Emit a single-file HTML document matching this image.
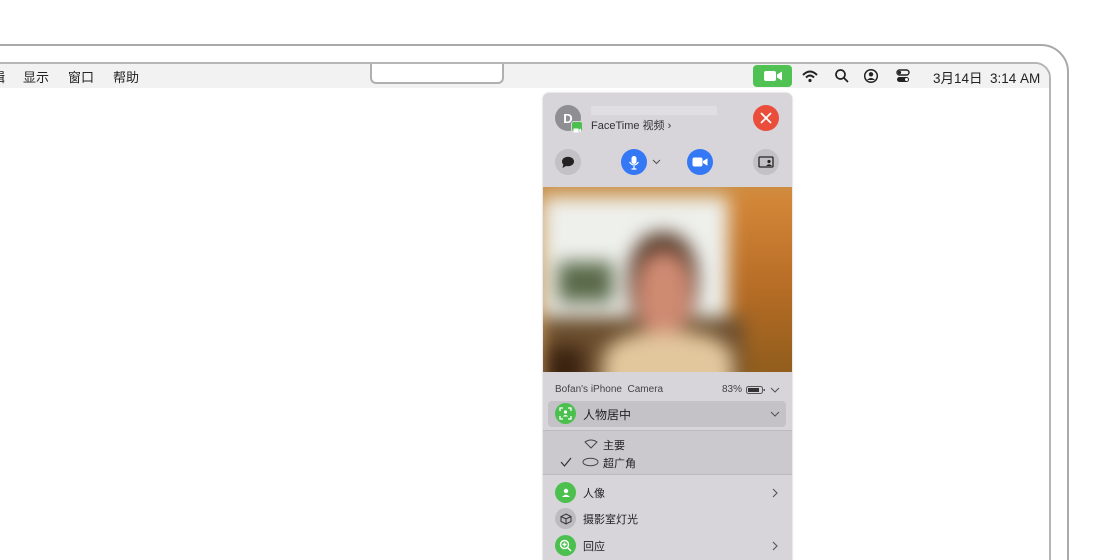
<!DOCTYPE html>
<html style="width:1120px;height:560px;overflow:hidden"><head><meta charset="utf-8"><style>
*{margin:0;padding:0;box-sizing:border-box}
body{width:1120px;height:560px;background:#fff;position:relative;overflow:hidden;font-family:"Liberation Sans","Noto Sans CJK SC",sans-serif;color:#222}
.abs{position:absolute}
.outer{left:-20px;top:44px;width:1089px;height:540px;border:2px solid #a9a9a9;border-radius:0 28px 0 0}
.screen{left:-20px;top:62px;width:1071px;height:520px;border:2px solid #b5b5b5;border-radius:0 16px 0 0;background:#fff;overflow:hidden}
.menubar{left:0;top:0;width:100%;height:24px;background:#f2f2f2}
.notch{left:388px;top:-2px;width:134px;height:22px;background:#fff;border:2px solid #b0b0b0;border-top:none;border-radius:0 0 6px 6px}
.mt{font-size:13px;top:3px;color:#222}
.panel{left:543px;top:93px;width:249px;height:480px;background:#d7d4da;border-radius:6px 6px 0 0;box-shadow:0 0 2px rgba(0,0,0,.25);overflow:hidden}
.circ{border-radius:50%;display:flex;align-items:center;justify-content:center}
.t13{font-size:12px}
.green{background:#4cc04e}
</style></head><body>
<div class="abs outer"></div>
<div class="abs screen">
 <div class="abs menubar"></div>
 <div class="abs notch"></div>
 <div class="abs mt" style="left:10px">辑</div>
 <div class="abs mt" style="left:41px">显示</div>
 <div class="abs mt" style="left:86px">窗口</div>
 <div class="abs mt" style="left:131px">帮助</div>
 <div class="abs" style="left:771px;top:1px;width:39px;height:22px;background:#50c153;border-radius:4px">
  <svg width="39" height="22"><rect x="11" y="6" width="12" height="10" rx="2" fill="#fff"/><path d="M24 9.5 L29 6.5 V15.5 L24 12.5Z" fill="#fff"/></svg>
 </div>
 <svg class="abs" style="left:819px;top:4px" width="18" height="16"><path d="M2 7 Q9 0 16 7" stroke="#222" stroke-width="2" fill="none"/><path d="M5 9.5 Q9 5.5 13 9.5" stroke="#222" stroke-width="2" fill="none"/><circle cx="9" cy="12.5" r="1.6" fill="#222"/></svg>
 <svg class="abs" style="left:852px;top:4px" width="16" height="16"><circle cx="6.5" cy="6.5" r="4.5" stroke="#222" stroke-width="1.7" fill="none"/><path d="M10 10 L14 14" stroke="#222" stroke-width="1.8"/></svg>
 <svg class="abs" style="left:881px;top:4px" width="16" height="16"><circle cx="8" cy="8" r="6.3" stroke="#222" stroke-width="1.5" fill="none"/><circle cx="8" cy="6.3" r="2.2" fill="#222"/><path d="M4 12 Q8 8 12 12" fill="#222"/></svg>
 <svg class="abs" style="left:913px;top:4px" width="16" height="16"><rect x="2" y="2" width="12" height="5" rx="2.5" stroke="#222" stroke-width="1.4" fill="none"/><circle cx="4.5" cy="4.5" r="1.6" fill="#222"/><rect x="2" y="9" width="12" height="5" rx="2.5" fill="#222"/><circle cx="11.5" cy="11.5" r="1.5" fill="#fff"/></svg>
 <div class="abs mt" style="left:951px;font-size:13.5px">3月14日&nbsp; 3:14 AM</div>
</div>

<div class="abs panel">
 <div class="abs circ" style="left:12px;top:12px;width:26px;height:26px;background:#8e8e93;color:#fff;font-size:13px;font-weight:bold">D</div>
 <div class="abs" style="left:28px;top:28px;width:12px;height:11px;background:#4cc04e;border-radius:3px;border:1px solid #d7d4da"><svg width="10" height="9"><rect x="1.5" y="2.5" width="5" height="4" fill="#fff"/><path d="M6.5 4 L9 2.5 V6.5Z" fill="#fff"/></svg></div>
 <div class="abs" style="left:48px;top:13px;width:126px;height:9px;background:#e0dee2"></div>
 <div class="abs" style="left:48px;top:24px;font-size:11px;color:#333">FaceTime 视频 ›</div>
 <div class="abs circ" style="left:210px;top:12px;width:26px;height:26px;background:#ea4d3a"><svg width="12" height="12"><path d="M1 1L11 11M11 1L1 11" stroke="#fff" stroke-width="1.8"/></svg></div>
 <div class="abs circ" style="left:12px;top:56px;width:26px;height:26px;background:#c3c0c6"><svg width="14" height="13"><ellipse cx="7" cy="5.5" rx="6" ry="4.8" fill="#222"/><path d="M2.5 8 L1.5 12 L6 9.5Z" fill="#222"/></svg></div>
 <div class="abs circ" style="left:78px;top:56px;width:26px;height:26px;background:#3478f6"><svg width="12" height="15"><rect x="3.5" y="1" width="5" height="8" rx="2.5" fill="#fff"/><path d="M1.5 7 Q6 13 10.5 7M6 11V14M3.5 14H8.5" stroke="#fff" stroke-width="1.2" fill="none"/></svg></div>
 <svg class="abs" style="left:109px;top:66px" width="9" height="6"><path d="M1 1L4.5 4.5L8 1" stroke="#555" stroke-width="1.1" fill="none"/></svg>
 <div class="abs circ" style="left:144px;top:56px;width:26px;height:26px;background:#3478f6"><svg width="16" height="10"><rect x="0.5" y="0.5" width="10" height="9" rx="2" fill="#fff"/><path d="M11 4L15.5 1.2V8.8L11 6Z" fill="#fff"/></svg></div>
 <div class="abs circ" style="left:210px;top:56px;width:26px;height:26px;background:#c3c0c6"><svg width="16" height="12"><rect x="1" y="1" width="14" height="10" rx="1" stroke="#222" stroke-width="1.3" fill="none"/><circle cx="11" cy="5.5" r="1.6" fill="#222"/><path d="M8 10 Q11 6.5 14 10Z" fill="#222"/></svg></div>

 <div class="abs" style="left:0;top:94px;width:249px;height:185px;overflow:hidden;background:#c99a5a">
  <div class="abs" style="left:-20px;top:-20px;width:300px;height:230px;filter:blur(9px)">
   <div class="abs" style="left:0;top:0;width:300px;height:40px;background:#c8904a"></div>
   <div class="abs" style="left:20px;top:30px;width:190px;height:140px;background:#eef0ec"></div>
   <div class="abs" style="left:205px;top:20px;width:95px;height:200px;background:linear-gradient(#d68a3a,#b76d26 50%,#8a5a1a)"></div>
   <div class="abs" style="left:35px;top:95px;width:55px;height:40px;background:#5a6a4a"></div>
   <div class="abs" style="left:20px;top:150px;width:200px;height:80px;background:#6b4e2e"></div>
   <div class="abs" style="left:105px;top:65px;width:70px;height:100px;background:#5a3d2c;border-radius:45%"></div>
   <div class="abs" style="left:113px;top:85px;width:56px;height:85px;background:#cf8a72;border-radius:45%"></div>
   <div class="abs" style="left:80px;top:165px;width:130px;height:70px;background:#e2c69c;border-radius:40% 40% 0 0"></div>
   <div class="abs" style="left:20px;top:180px;width:40px;height:50px;background:#3a2210"></div>
  </div>
 </div>

 <div class="abs" style="left:12px;top:291px;font-size:10px;color:#444">Bofan's iPhone&nbsp; Camera</div>
 <div class="abs" style="left:179px;top:291px;font-size:10px;color:#444">83%</div>
 <svg class="abs" style="left:203px;top:292px" width="20" height="10"><rect x="0.5" y="1.5" width="16" height="7" rx="2" stroke="#555" fill="none"/><rect x="2" y="3" width="11" height="4" fill="#333"/><rect x="17.5" y="4" width="1.5" height="2" fill="#555"/></svg>
 <svg class="abs" style="left:227px;top:294px" width="10" height="6"><path d="M1 1L5 5L9 1" stroke="#555" stroke-width="1.1" fill="none"/></svg>

 <div class="abs" style="left:5px;top:308px;width:238px;height:26px;background:#c4c1c7;border-radius:4px"></div>
 <div class="abs circ green" style="left:12px;top:310px;width:21px;height:21px"><svg width="13" height="13"><path d="M1 4V1H4M9 1H12V4M12 9V12H9M4 12H1V9" stroke="#fff" stroke-width="1.3" fill="none"/><circle cx="6.5" cy="5" r="1.6" fill="#fff"/><path d="M3.8 9.5Q6.5 6.5 9.2 9.5Z" fill="#fff"/></svg></div>
 <div class="abs t13" style="left:40px;top:313px;color:#222">人物居中</div>
 <svg class="abs" style="left:227px;top:318px" width="10" height="6"><path d="M1 1L5 5L9 1" stroke="#555" stroke-width="1.1" fill="none"/></svg>

 <div class="abs" style="left:0;top:337px;width:249px;height:45px;background:#cbc8ce;border-top:1px solid #bdbabf;border-bottom:1px solid #bdbabf"></div>
 <svg class="abs" style="left:41px;top:346px" width="14" height="10"><path d="M1 3Q7 -1 13 3L7 9Z" stroke="#444" stroke-width="1" fill="none"/></svg>
 <div class="abs t13" style="left:60px;top:344px;font-size:11px">主要</div>
 <svg class="abs" style="left:17px;top:364px" width="12" height="10"><path d="M1 5L4.5 9L11 1" stroke="#333" stroke-width="1.2" fill="none"/></svg>
 <svg class="abs" style="left:39px;top:364px" width="17" height="10"><ellipse cx="8.5" cy="5" rx="7.5" ry="3.8" stroke="#444" stroke-width="1" fill="none"/></svg>
 <div class="abs t13" style="left:60px;top:362px;font-size:11px">超广角</div>

 <div class="abs circ green" style="left:12px;top:389px;width:21px;height:21px"><svg width="12" height="12"><circle cx="6" cy="4" r="2.2" fill="#fff"/><path d="M2 10Q6 5.5 10 10Z" fill="#fff"/></svg></div>
 <div class="abs t13" style="left:40px;top:392px;font-size:11px">人像</div>
 <svg class="abs" style="left:229px;top:395px" width="6" height="10"><path d="M1 1L5 5L1 9" stroke="#555" stroke-width="1.1" fill="none"/></svg>

 <div class="abs circ" style="left:12px;top:415px;width:21px;height:21px;background:#bdbac0"><svg width="12" height="12"><path d="M6 1L11 3.5V8.5L6 11L1 8.5V3.5Z M1 3.5L6 6L11 3.5M6 6V11" stroke="#333" stroke-width="1" fill="none"/></svg></div>
 <div class="abs t13" style="left:40px;top:418px;font-size:11px">摄影室灯光</div>

 <div class="abs circ green" style="left:12px;top:442px;width:21px;height:21px"><svg width="13" height="13"><circle cx="5.5" cy="5.5" r="4" stroke="#fff" stroke-width="1.4" fill="none"/><path d="M8.5 8.5L12 12M5.5 3.5V7.5M3.5 5.5H7.5" stroke="#fff" stroke-width="1.4"/></svg></div>
 <div class="abs t13" style="left:40px;top:445px;font-size:11px">回应</div>
 <svg class="abs" style="left:229px;top:448px" width="6" height="10"><path d="M1 1L5 5L1 9" stroke="#555" stroke-width="1.1" fill="none"/></svg>
</div>
</body></html>
